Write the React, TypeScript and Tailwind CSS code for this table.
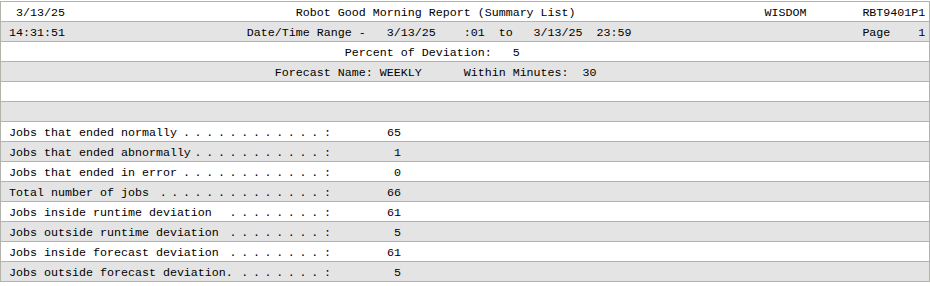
const CH = 7;

// build a fixed-column line like the report printer does
function line(fields: [number, string][]) {
  let s = "";
  for (const [col, text] of fields) {
    s = s.padEnd(col, " ") + text;
  }
  return s;
}

const header: { text: string; gray: boolean }[] = [
  {
    text: line([
      [1, "3/13/25"],
      [41, "Robot Good Morning Report (Summary List)"],
      [108, "WISDOM"],
      [122, "RBT9401P1"],
    ]),
    gray: false,
  },
  {
    text: line([
      [0, "14:31:51"],
      [34, "Date/Time Range -"],
      [54, "3/13/25"],
      [65, ":01"],
      [70, "to"],
      [75, "3/13/25"],
      [84, "23:59"],
      [122, "Page"],
      [130, "1"],
    ]),
    gray: true,
  },
  { text: line([[48, "Percent of Deviation:"], [72, "5"]]), gray: false },
  {
    text: line([
      [38, "Forecast Name: WEEKLY"],
      [65, "Within Minutes:"],
      [82, "30"],
    ]),
    gray: true,
  },
  { text: "", gray: false },
  { text: "", gray: true },
];

const stats = [
  { label: "Jobs that ended normally", dots: 12, value: 65 },
  { label: "Jobs that ended abnormally", dots: 11, value: 1 },
  { label: "Jobs that ended in error", dots: 12, value: 0 },
  { label: "Total number of jobs", dots: 14, value: 66 },
  { label: "Jobs inside runtime deviation", dots: 8, value: 61 },
  { label: "Jobs outside runtime deviation", dots: 8, value: 5 },
  { label: "Jobs inside forecast deviation", dots: 8, value: 61 },
  { label: "Jobs outside forecast deviation.", dots: 7, value: 5 },
];

function Row({ gray, children }: { gray: boolean; children?: React.ReactNode }) {
  return (
    <div
      className={`flex h-[20px] items-start border-b border-[#b2b3aa] pl-[8px] pt-[4px] ${
        gray ? "bg-[#e4e4e4]" : "bg-white"
      }`}
    >
      {children}
    </div>
  );
}

export default function App() {
  return (
    <div className="h-[286px] w-[930px] bg-white pt-px">
      <div className="border-l border-r border-t border-[#b2b3aa] font-['Liberation_Mono','Courier_New',monospace] text-[11.667px] leading-[15px] text-black">
        {header.map((h, i) => (
          <Row key={i} gray={h.gray}>
            <span className="whitespace-pre">{h.text}</span>
          </Row>
        ))}
        {stats.map((s, i) => (
          <Row key={s.label} gray={i % 2 === 1}>
            <div className="flex" style={{ width: 45 * CH }}>
              <span className="whitespace-pre">{s.label}</span>
              <div className="flex flex-1 justify-end pr-[3.5px]">
                {Array.from({ length: s.dots }).map((_, d) => (
                  <span key={d} className="w-[11.667px] text-center">
                    .
                  </span>
                ))}
              </div>
            </div>
            <span className="w-[7px] text-center">:</span>
            <span className="w-[70px] text-right">{s.value}</span>
          </Row>
        ))}
      </div>
    </div>
  );
}
